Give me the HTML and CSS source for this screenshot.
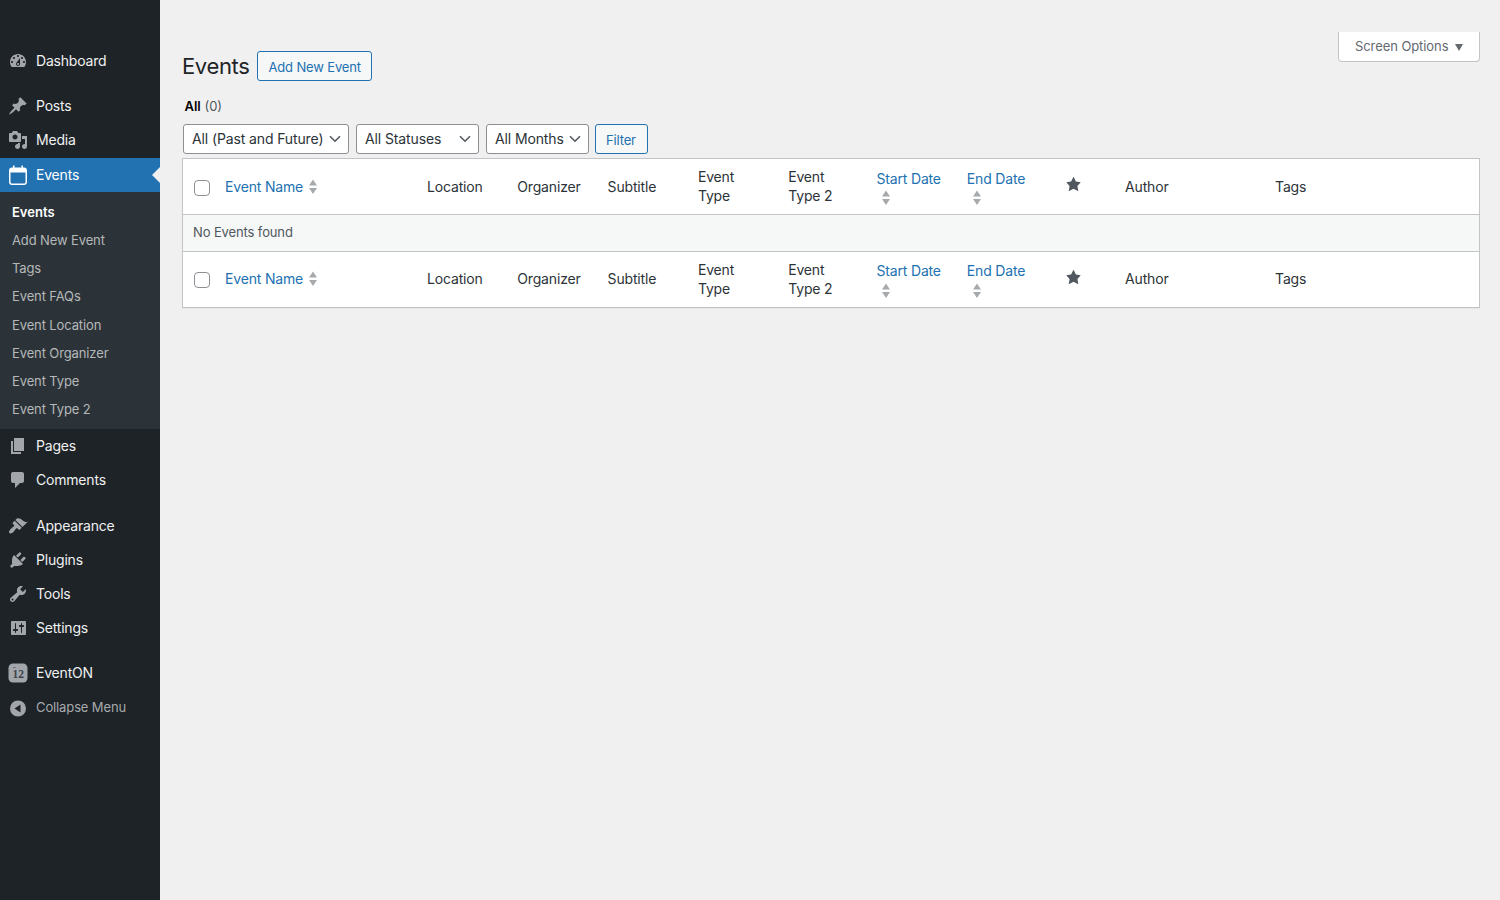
FILE: index.html
```html
<!DOCTYPE html>
<html lang="en">
<head>
  <meta charset="UTF-8" />
  <meta name="viewport" content="width=device-width, initial-scale=1.0"/>
  <title>Events</title>
  <link rel="stylesheet" href="styles.css">
</head>
<body>
  <!-- Shared shapes -->
  <svg class="defs" width="0" height="0">
    <symbol id="sort" viewBox="0 0 8 14">
      <path d="M4 0 L8 6 H0 Z M0 8.5 H8 L4 14.5 Z" />
    </symbol>
    <symbol id="star" viewBox="0 0 20 20">
      <path d="M10 1l3 6 6 .75-4.12 4.62L16 19l-6-3-6 3 1.13-6.63L1 7.75 7 7z" />
    </symbol>
    <symbol id="chevron" viewBox="0 0 12 8">
      <path d="M1 1.2 L6 6.2 L11 1.2" fill="none" stroke="#50575e" stroke-width="1.6" />
    </symbol>
  </svg>

  <nav class="sidebar">
    <a class="item" href="#">
      <svg class="icon" viewBox="0 0 20 20"><path fill-rule="evenodd" d="M3.76 16h12.48c1.1-1.37 1.76-3.11 1.76-5 0-4.42-3.58-8-8-8s-8 3.58-8 8c0 1.89.66 3.63 1.76 5zM10 4c.55 0 1 .45 1 1s-.45 1-1 1-1-.45-1-1 .45-1 1-1zM6 6c.55 0 1 .45 1 1s-.45 1-1 1-1-.45-1-1 .45-1 1-1zm8 0c.55 0 1 .45 1 1s-.45 1-1 1-1-.45-1-1 .45-1 1-1zm-5.37 5.55L12 7v6c0 1.1-.9 2-2 2s-2-.9-2-2c0-.57.24-1.08.63-1.45zM4 10c.55 0 1 .45 1 1s-.45 1-1 1-1-.45-1-1 .45-1 1-1zm12 0c.55 0 1 .45 1 1s-.45 1-1 1-1-.45-1-1 .45-1 1-1zm-5 3c0-.55-.45-1-1-1s-1 .45-1 1 .45 1 1 1 1-.45 1-1z"/></svg>
      Dashboard
    </a>
    <a class="item gap" href="#">
      <svg class="icon" viewBox="0 0 20 20"><path d="M10.44 3.02l1.82-1.82 6.36 6.35-1.83 1.82c-1.05-.68-2.48-.57-3.41.36l-.75.75c-.92.93-1.04 2.35-.35 3.41l-1.83 1.82-2.41-2.41-2.8 2.79c-.42.42-3.38 2.71-3.8 2.29s1.86-3.39 2.28-3.81l2.79-2.79L4.1 9.36l1.83-1.82c1.05.69 2.48.57 3.4-.36l.75-.75c.93-.92 1.05-2.35.36-3.41z"/></svg>
      Posts
    </a>
    <a class="item" href="#">
      <svg class="icon" viewBox="0 0 20 20"><path fill-rule="evenodd" d="M13 11V4c0-.55-.45-1-1-1h-1.67L9 1H5L3.67 3H2c-.55 0-1 .45-1 1v7c0 .55.45 1 1 1h10c.55 0 1-.45 1-1zM7 4.5c1.38 0 2.5 1.12 2.5 2.5S8.38 9.5 7 9.5 4.5 8.38 4.5 7 5.62 4.5 7 4.5zM14 6h5v10.5c0 1.38-1.12 2.5-2.5 2.5S14 17.88 14 16.5s1.12-2.5 2.5-2.5c.17 0 .34.02.5.05V9h-3V6zm-4 8.05V13h2v3.5c0 1.38-1.12 2.5-2.5 2.5S7 17.88 7 16.5 8.12 14 9.5 14c.17 0 .34.02.5.05z"/></svg>
      Media
    </a>
    <a class="item current" href="#">
      <svg class="icon" viewBox="0 0 20 20"><path fill-rule="evenodd" d="M4 2.500H5V.500H6.500V2.500H13.500V.500H15V2.500H16C17.700 2.500 19 3.800 19 5.500V17C19 18.700 17.700 20 16 20H4C2.300 20 1 18.700 1 17V5.500C1 3.800 2.300 2.500 4 2.500ZM2.500 7.500V17C2.500 17.900 3.100 18.500 4 18.500H16C16.900 18.500 17.500 17.900 17.500 17V7.500Z"/></svg>
      Events
    </a>
    <div class="submenu">
      <a class="active" href="#">Events</a>
      <a href="#">Add New Event</a>
      <a href="#">Tags</a>
      <a href="#">Event FAQs</a>
      <a href="#">Event Location</a>
      <a href="#">Event Organizer</a>
      <a href="#">Event Type</a>
      <a href="#">Event Type 2</a>
    </div>
    <a class="item" href="#">
      <svg class="icon" viewBox="0 0 20 20"><path d="M6 15V2h10v13H6zm-1 1h8v2H3V5h2v11z"/></svg>
      Pages
    </a>
    <a class="item" href="#">
      <svg class="icon" viewBox="0 0 20 20"><path d="M5 2h9c1.1 0 2 .9 2 2v7c0 1.1-.9 2-2 2h-2l-5 5v-5H5c-1.1 0-2-.9-2-2V4c0-1.1.9-2 2-2z"/></svg>
      Comments
    </a>
    <a class="item gap-lg" href="#">
      <svg class="icon" viewBox="0 0 20 20"><path d="M14.48 11.06L7.41 3.99l1.5-1.5c.5-.56 2.3-.47 3.51.32 1.21.8 1.43 1.28 2.91 2.1 1.18.64 2.45 1.26 4.45.85zm-.71.71L6.7 4.7 4.93 6.47c-.39.39-.39 1.02 0 1.41l1.06 1.06c.39.39.39 1.03 0 1.42-.6.6-1.43 1.11-2.21 1.69-.35.26-.7.53-1.01.84C1.43 14.23.4 16.08 1.4 17.07c.99 1 2.84-.03 4.18-1.36.31-.31.58-.66.85-1.02.57-.78 1.08-1.61 1.69-2.21.39-.39 1.02-.39 1.41 0l1.06 1.06c.39.39 1.02.39 1.41 0z"/></svg>
      Appearance
    </a>
    <a class="item" href="#">
      <svg class="icon" viewBox="0 0 20 20"><path d="M13.11 4.36L9.87 7.6 8 5.73l3.24-3.24c.35-.34 1.05-.2 1.56.32.52.51.66 1.21.31 1.55zm-8 1.77l.91-1.12 9.01 9.01-1.19.84c-.71.71-2.63 1.16-3.82 1.16H6.14L4.9 17.26c-.59.59-1.54.59-2.12 0-.59-.58-.59-1.53 0-2.12l1.24-1.24v-3.88c0-1.13.4-3.19 1.09-3.89zm7.26 3.97l3.24-3.24c.34-.35 1.04-.21 1.55.31.52.51.66 1.21.31 1.55l-3.24 3.25z"/></svg>
      Plugins
    </a>
    <a class="item" href="#">
      <svg class="icon" viewBox="0 0 20 20"><path fill-rule="evenodd" d="M16.68 9.77c-1.34 1.34-3.3 1.67-4.95.99l-5.41 6.52c-.99.99-2.59.99-3.58 0s-.99-2.59 0-3.57l6.52-5.42c-.68-1.65-.35-3.61.99-4.95 1.28-1.28 3.12-1.62 4.72-1.06l-2.89 2.89 2.82 2.82 2.86-2.87c.53 1.58.18 3.39-1.08 4.65zM3.81 16.21c.4.39 1.04.39 1.43 0 .4-.4.4-1.04 0-1.43-.39-.4-1.03-.4-1.43 0-.39.39-.39 1.03 0 1.43z"/></svg>
      Tools
    </a>
    <a class="item" href="#">
      <svg class="icon" viewBox="0 0 20 20"><path fill-rule="evenodd" d="M18 16V4c0-.55-.45-1-1-1H4c-.55 0-1 .45-1 1v12c0 .55.45 1 1 1h13c.55 0 1-.45 1-1zM8 11h1c.55 0 1 .45 1 1s-.45 1-1 1H8v1.500c0 .28-.22.5-.5.5s-.5-.22-.5-.5V13H6c-.55 0-1-.45-1-1s.45-1 1-1h1V5.500c0-.28.22-.5.5-.5s.5.22.5.5V11zm5-2h-1c-.55 0-1-.45-1-1s.45-1 1-1h1V5.500c0-.28.22-.5.5-.5s.5.22.5.5V7h1c.55 0 1 .45 1 1s-.45 1-1 1h-1v5.500c0 .28-.22.5-.5.5s-.5-.22-.5-.5V9z"/></svg>
      Settings
    </a>
    <a class="item gap" href="#">
      <svg class="icon" viewBox="0 0 20 20">
        <rect x=".5" y=".5" width="19" height="19" rx="4.500" />
        <path d="M5 4.500h3" stroke="#50575e" stroke-width=".6" />
        <text class="badge-num" x="10.300" y="14.500" text-anchor="middle">12</text>
      </svg>
      EventON
    </a>
    <a class="item collapse" href="#">
      <svg class="icon" viewBox="0 0 20 20"><path fill-rule="evenodd" d="M10 2.500a8 8 0 1 1 0 16a8 8 0 1 1 0-16zM12.500 6.500L6.500 10.500l6 4z"/></svg>
      Collapse Menu
    </a>
  </nav>

  <main class="content">
    <div class="top">
      <div class="heading">
        <h1>Events</h1>
        <a class="button" href="#">Add New Event</a>
      </div>
      <button class="screen-options">Screen Options <span class="caret"></span></button>
    </div>

    <div class="views"><b>All</b> <span>(0)</span></div>

    <div class="filters">
      <div class="select past">All (Past and Future) <svg><use href="#chevron"/></svg></div>
      <div class="select status">All Statuses <svg><use href="#chevron"/></svg></div>
      <div class="select months">All Months <svg><use href="#chevron"/></svg></div>
      <a class="button filter" href="#">Filter</a>
    </div>

    <table class="list">
      <colgroup>
        <col class="c-check">
        <col class="c-name">
        <col class="c-std" span="7">
        <col class="c-star">
        <col class="c-author">
        <col>
      </colgroup>
      <thead>
        <tr>
          <th class="check"><input type="checkbox"></th>
          <th class="sortable"><a href="#">Event Name <svg><use href="#sort"/></svg></a></th>
          <th>Location</th>
          <th>Organizer</th>
          <th>Subtitle</th>
          <th class="type">Event Type</th>
          <th class="type">Event Type 2</th>
          <th class="sortable date"><a href="#">Start Date <svg><use href="#sort"/></svg></a></th>
          <th class="sortable date"><a href="#">End Date <svg><use href="#sort"/></svg></a></th>
          <th class="star"><svg><use href="#star"/></svg></th>
          <th>Author</th>
          <th>Tags</th>
        </tr>
      </thead>
      <tbody>
        <tr><td colspan="12">No Events found</td></tr>
      </tbody>
      <tfoot>
        <tr>
          <th class="check"><input type="checkbox"></th>
          <th class="sortable"><a href="#">Event Name <svg><use href="#sort"/></svg></a></th>
          <th>Location</th>
          <th>Organizer</th>
          <th>Subtitle</th>
          <th class="type">Event Type</th>
          <th class="type">Event Type 2</th>
          <th class="sortable date"><a href="#">Start Date <svg><use href="#sort"/></svg></a></th>
          <th class="sortable date"><a href="#">End Date <svg><use href="#sort"/></svg></a></th>
          <th class="star"><svg><use href="#star"/></svg></th>
          <th>Author</th>
          <th>Tags</th>
        </tr>
      </tfoot>
    </table>
  </main>
</body>
</html>
```
FILE: styles.css
```css
* {
  box-sizing: border-box;
}
body {
  margin: 0;
  display: flex;
  height: 100vh;
  overflow: hidden;
  background: #f0f0f0;
  color: #3c434a;
  font-family: Inter, "Liberation Sans", sans-serif;
  font-size: 13px;
  letter-spacing: -0.12px;
}
a {
  color: #2271b1;
  text-decoration: none;
}
.defs {
  position: absolute;
}

/* Sidebar */
.sidebar {
  width: 160px;
  flex: none;
  padding-top: 44px;
  background: #1d2327;
}
.item {
  display: flex;
  align-items: center;
  gap: 8px;
  height: 34px;
  padding: 0 0 1px 8px;
  color: #f0f0f1;
  font-size: 14px;
  letter-spacing: -0.2px;
}
.gap {
  margin-top: 11px;
}
.gap-lg {
  margin-top: 12px;
}
.icon {
  width: 20px;
  height: 20px;
  margin-top: 1px;
  fill: #a2a6aa;
}
.current {
  position: relative;
  margin-top: 1px;
  background: #2271b1;
  color: #fff;
}
.current .icon {
  fill: #fff;
}
.current::after {
  content: "";
  position: absolute;
  right: 0;
  top: 9px;
  border: 8px solid transparent;
  border-left: 0;
  border-right-color: #f0f0f0;
}
.submenu {
  height: 237px;
  padding: 6px 12px;
  background: #2c3338;
}
.submenu a {
  display: block;
  line-height: 28.15px;
  color: #b5b8ba;
}
.submenu .active {
  color: #fff;
  font-weight: 600;
  letter-spacing: 0;
}
.badge-num {
  fill: #3c434a;
  font: bold 11.5px "Liberation Serif", serif;
  letter-spacing: 0;
}
.collapse {
  padding-bottom: 0;
  color: #a7aaad;
  font-size: 13px;
  letter-spacing: -0.12px;
}

/* Content */
.content {
  flex: 1;
  padding: 32px 20px 0 22px;
}
.top {
  display: flex;
  justify-content: space-between;
  align-items: flex-start;
  height: 64px;
}
.heading {
  display: flex;
  align-items: center;
  gap: 8px;
  padding-top: 19px;
}
h1 {
  margin: 0;
  color: #1d2327;
  font-size: 22px;
  font-weight: 400;
  line-height: 30px;
  letter-spacing: -0.35px;
}
.button {
  height: 30px;
  padding: 0 10px;
  border: 1px solid #2271b1;
  border-radius: 3px;
  background: #f6f7f7;
  line-height: 30px;
  letter-spacing: -0.15px;
}
.screen-options {
  display: flex;
  align-items: center;
  justify-content: space-between;
  width: 142px;
  height: 30px;
  padding: 0 16px 1px;
  border: 1px solid #c3c4c7;
  border-top: 0;
  border-radius: 0 0 4px 4px;
  background: #fff;
  color: #646970;
  font: inherit;
  letter-spacing: -0.08px;
}
.caret {
  margin-top: 2px;
  border: 4.5px solid transparent;
  border-top: 7px solid #646970;
  border-bottom: 0;
}
.views {
  height: 22px;
  padding-left: 2.5px;
  line-height: 20px;
  color: #50575e;
  letter-spacing: 0;
}
.views b {
  color: #000;
  font-weight: 600;
}
.filters {
  display: flex;
  gap: 7px;
  padding: 6px 0 4px 1px;
}
.select {
  display: flex;
  align-items: center;
  justify-content: space-between;
  height: 30px;
  padding: 0 7px 1px 8px;
  border: 1px solid #8c8f94;
  border-radius: 3px;
  background: #fff;
  color: #2c3338;
  font-size: 14px;
  white-space: nowrap;
}
.select svg {
  width: 12px;
  height: 8px;
  margin-top: 1px;
}
.past {
  width: 166px;
}
.status {
  width: 123px;
}
.months {
  width: 103px;
}
.filter {
  width: 53px;
  margin-left: -1px;
}

/* Events table */
.list {
  width: 1298px;
  table-layout: fixed;
  border: 1px solid #c3c4c7;
  border-spacing: 0;
  background: #fff;
  box-shadow: 0 1px 1px rgba(0, 0, 0, 0.04);
}
.c-check { width: 34px; }
.c-name { width: 200px; }
.c-std { width: 90.3px; }
.c-star { width: 66px; }
.c-author { width: 150px; }
th {
  height: 55px;
  padding: 0 10px;
  color: #2c3338;
  font-size: 14px;
  font-weight: 400;
  line-height: 19px;
  letter-spacing: -0.17px;
  text-align: left;
}
thead th {
  height: 56px;
  border-bottom: 1px solid #c3c4c7;
}
tfoot th,
th.type {
  padding-bottom: 2px;
}
td {
  height: 37px;
  padding: 0 10px 2px;
  border-bottom: 1px solid #c3c4c7;
  background: #f6f7f7;
  color: #50575e;
}
.check {
  padding: 2px 0 0 11px;
}
tfoot .check {
  padding-bottom: 1px;
}
.check input {
  display: block;
  appearance: none;
  width: 16px;
  height: 16px;
  margin: 0;
  border: 1px solid #8c8f94;
  border-radius: 4px;
  background: #fff;
}
.sortable {
  padding-left: 8px;
  padding-right: 8px;
}
.sortable a {
  display: flex;
  flex-wrap: wrap;
  align-items: center;
}
.sortable svg {
  width: 8px;
  height: 15px;
  margin: 1px 6px;
  fill: #a7aaad;
}
.date svg {
  margin: 2px 6px 0;
}
tfoot .date svg {
  margin: 3px 6px -1px;
}
.star,
tfoot .star {
  padding: 0 0 5px 16px;
}
.star svg {
  display: block;
  width: 17px;
  height: 16px;
  fill: #50575e;
}
```
